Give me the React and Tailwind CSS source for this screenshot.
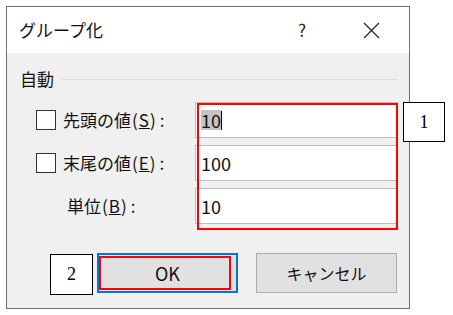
import React from 'react';

const rows = [
  { label: '先頭の値', key: 'S', value: '10', check: true, selected: true },
  { label: '末尾の値', key: 'E', value: '100', check: true },
  { label: '単位', key: 'B', value: '10', check: false },
];

const Label = ({ row }) => (
  <span className="text-[17px] text-[#111] flex items-center">
    {row.label}
    <span className="tracking-[1px] ml-[1px]">
      (<span className="underline">{row.key}</span>)
    </span>
    <span className="ml-[3px]">:</span>
  </span>
);

const Row = ({ row }) => (
  <div className="flex items-center h-[36px]">
    <div className="w-[188px] flex items-center h-full">
      {row.check ? (
        <>
          <span className="ml-[29px] w-[20px] h-[20px] border border-[#333] bg-white" />
          <span className="ml-[7px]">
            <Label row={row} />
          </span>
        </>
      ) : (
        <span className="ml-[60px]">
          <Label row={row} />
        </span>
      )}
    </div>
    <div className="w-[203px] h-full bg-white border border-[#bdbdbd] flex items-center pl-[5px]">
      {row.selected ? (
        <span className="flex items-center text-[18px] text-[#111] leading-none">
          <span className="bg-[#c4c4c4] py-[1px]">{row.value}</span>
          <span className="w-[1px] h-[19px] bg-black" />
        </span>
      ) : (
        <span className="text-[18px] text-[#111] leading-none">{row.value}</span>
      )}
    </div>
  </div>
);

export default function App() {
  return (
    <div className="relative w-[453px] h-[315px] bg-white pt-[6px] pl-[6px] font-['Noto_Sans_CJK_JP',sans-serif]">
      <div className="w-[404px] h-[303px] border border-[#6f6f6f] flex flex-col">
        {/* title bar */}
        <div className="h-[46px] bg-white flex items-center">
          <span className="ml-[12px] text-[17px] text-[#111]">グループ化</span>
          <span className="ml-auto text-[17px] text-[#222]">?</span>
          <svg className="ml-[57px] mr-[29px]" width="17" height="17" viewBox="0 0 17 17">
            <path d="M1 1 L16 16 M16 1 L1 16" stroke="#222" strokeWidth="1.2" fill="none" />
          </svg>
        </div>

        {/* body */}
        <div className="flex-1 bg-[#f0f0f0] flex flex-col">
          <div className="mt-[13px] h-[26px] flex items-center pl-[13px] pr-[11px]">
            <span className="text-[17px] text-[#111]">自動</span>
            <div className="flex-1 ml-[8px] h-[1px] bg-[#dcdcdc]" />
          </div>

          <div className="mt-[10px] flex flex-col gap-[7px]">
            {rows.map((r) => (
              <Row key={r.key} row={r} />
            ))}
          </div>

          <div className="mt-[29px] flex items-center">
            <button className="relative ml-[90px] w-[141px] h-[40px] bg-[#e1e1e1] border-2 border-[#0078d7] text-[18px] text-[#111]">
              OK
              <span className="absolute left-[0px] top-[1px] w-[132px] h-[34px] border-2 border-[#ff0000]" />
            </button>
            <button className="ml-[18px] w-[141px] h-[40px] bg-[#e1e1e1] border border-[#adadad] text-[16px] text-[#111]">
              キャンセル
            </button>
          </div>
        </div>
      </div>

      {/* annotations */}
      <div className="absolute left-[197px] top-[103px] w-[201px] h-[127px] border-2 border-[#ff0000]" />
      <div className="absolute left-[403px] top-[102px] w-[42px] h-[40px] bg-white border border-black flex items-center justify-center font-['Liberation_Serif',serif] text-[18px] text-black">
        1
      </div>
      <div className="absolute left-[50px] top-[254px] w-[43px] h-[41px] bg-white border border-black flex items-center justify-center font-['Liberation_Serif',serif] text-[18px] text-black">
        2
      </div>
    </div>
  );
}
